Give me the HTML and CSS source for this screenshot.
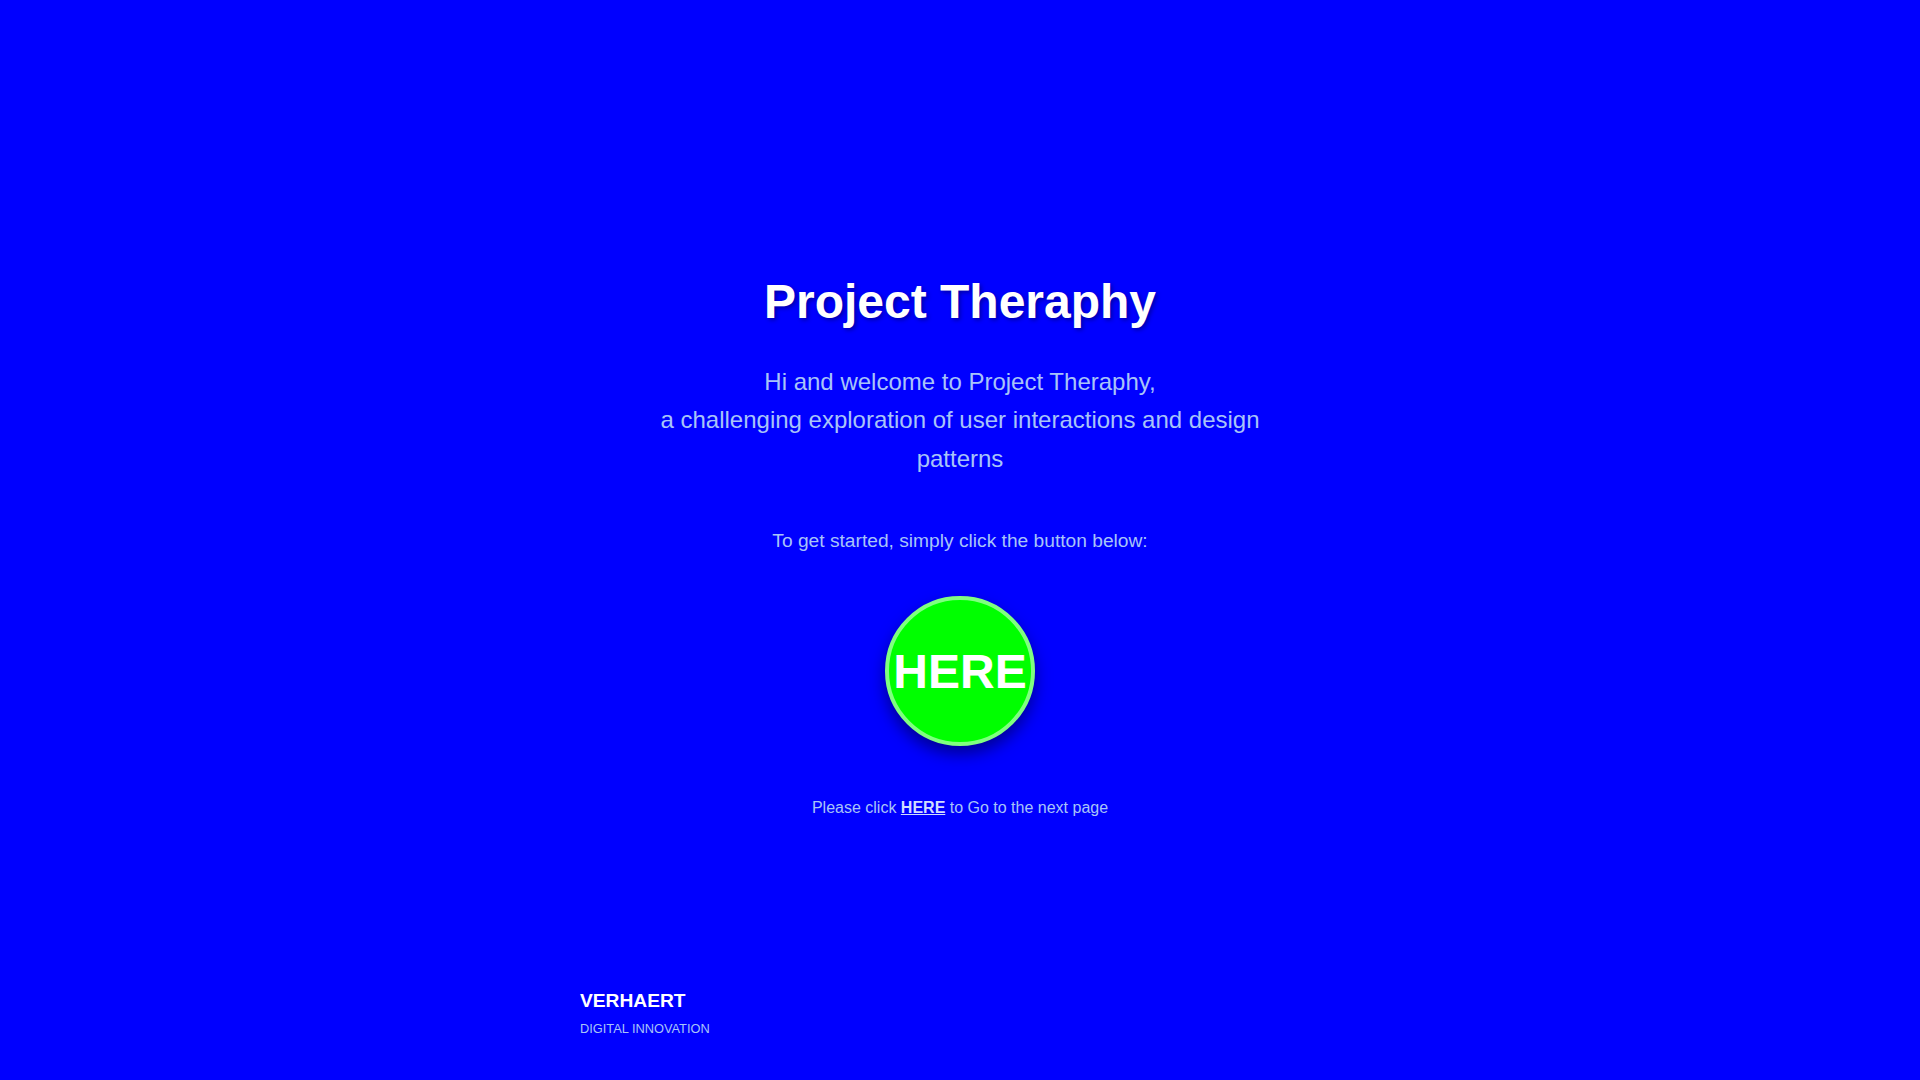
FILE: index.html
```html
<!DOCTYPE html>
<html lang="en">
<head>
<meta charset="utf-8">
<title>Project Theraphy</title>
<link rel="stylesheet" href="styles.css">
</head>
<body>
<div class="page">
  <main class="content">
    <h1 class="title">Project Theraphy</h1>
    <p class="intro">Hi and welcome to Project Theraphy,<br>a challenging exploration of user interactions and design patterns</p>
    <p class="lead">To get started, simply click the button below:</p>
    <div class="button-wrap"><a class="here-button" href="#">HERE</a></div>
    <p class="note">Please click <a class="note-link" href="#">HERE</a> to Go to the next page</p>
  </main>
  <footer class="footer">
    <div class="brand">VERHAERT</div>
    <div class="tagline">DIGITAL INNOVATION</div>
  </footer>
</div>
</body>
</html>
```

FILE: styles.css
```css
html, body {
  margin: 0;
  padding: 0;
}
body {
  background: #0000ff;
  font-family: "Liberation Sans", Arial, sans-serif;
  color: #a8c4f8;
}
.page {
  width: 760px;
  margin: 0 auto;
  min-height: 1080px;
  display: flex;
  flex-direction: column;
}
.content {
  display: flex;
  flex-direction: column;
  align-items: center;
  text-align: center;
  padding-top: 274px;
}
.title {
  margin: 0;
  font-size: 48px;
  line-height: 56px;
  font-weight: bold;
  color: #ffffff;
  text-shadow: 2px 2px 4px rgba(0, 0, 60, 0.45);
}
.intro {
  margin: 33px 0 0;
  max-width: 640px;
  font-size: 24px;
  line-height: 38.4px;
}
.lead {
  margin: 51px 0 0;
  font-size: 19.2px;
  line-height: 24px;
}
.button-wrap {
  margin-top: 43px;
}
.here-button {
  box-sizing: border-box;
  width: 150px;
  height: 150px;
  border-radius: 50%;
  border: 4px solid #80ff80;
  background: #00ff00;
  color: #ffffff;
  font-size: 48px;
  font-weight: bold;
  text-decoration: none;
  display: flex;
  align-items: center;
  justify-content: center;
  box-shadow: 0 8px 16px rgba(0, 0, 60, 0.55);
}
.note {
  margin: 52px 0 0;
  font-size: 16px;
  line-height: 20px;
}
.note-link {
  color: #d0dcff;
  font-weight: bold;
  text-decoration: underline;
}
.footer {
  margin-top: auto;
  padding-bottom: 43px;
  text-align: left;
}
.brand {
  font-size: 19.2px;
  font-weight: bold;
  color: #ffffff;
  line-height: 22px;
}
.tagline {
  margin-top: 9px;
  font-size: 12.8px;
  line-height: 16px;
}
```
